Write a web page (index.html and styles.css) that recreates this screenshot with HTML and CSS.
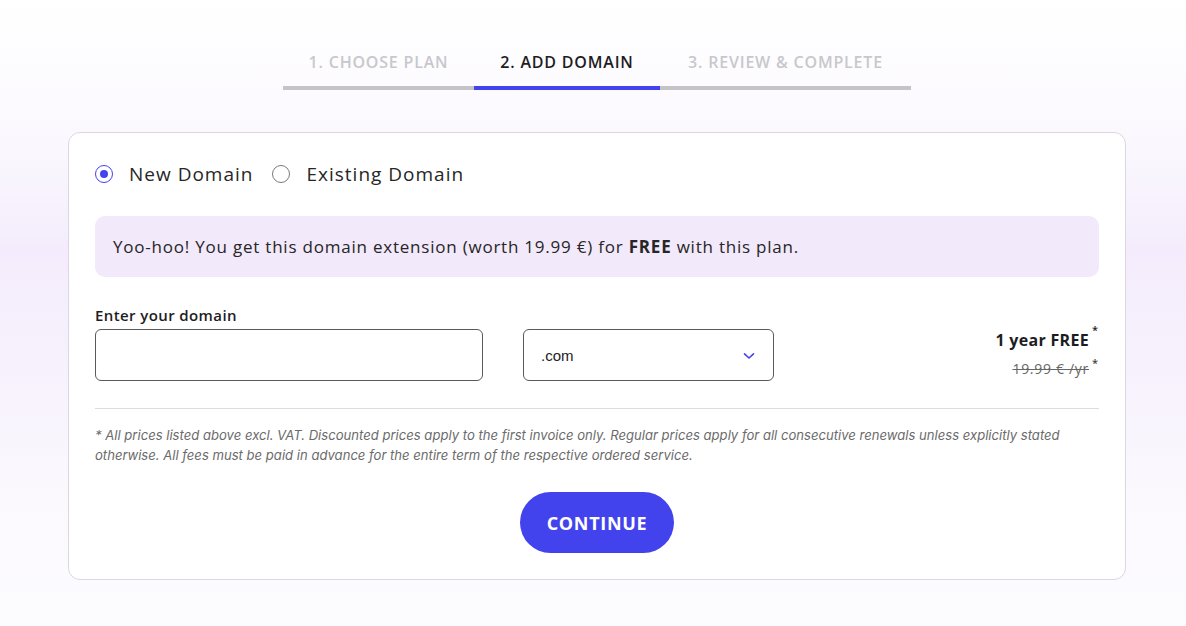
FILE: index.html
```html
<!DOCTYPE html>
<html>
<head>
<meta charset="utf-8">
<link rel="stylesheet" href="styles.css">
</head>
<body>
<div class="page">
  <nav class="steps">
    <div class="step step-1">1. CHOOSE PLAN</div>
    <div class="step step-2 active">2. ADD DOMAIN</div>
    <div class="step step-3">3. REVIEW &amp; COMPLETE</div>
  </nav>
  <main class="card">
    <div class="radios">
      <label class="radio"><span class="dot checked"></span>New Domain</label>
      <label class="radio"><span class="dot"></span>Existing Domain</label>
    </div>
    <div class="info">Yoo-hoo! You get this domain extension (worth 19.99 €) for <b>FREE</b> with this plan.</div>
    <div class="field-label">Enter your domain</div>
    <div class="row">
      <div class="input"></div>
      <div class="select"><span>.com</span>
        <svg width="12" height="8" viewBox="0 0 12 8"><path d="M1.5 1.8 L6 6 L10.5 1.8" fill="none" stroke="#4343ee" stroke-width="1.6" stroke-linecap="round" stroke-linejoin="round"/></svg>
      </div>
      <div class="price">
        <div class="free">1 year FREE<sup>*</sup></div>
        <div class="old"><s>19.99 € /yr</s><sup>*</sup></div>
      </div>
    </div>
    <hr class="divider">
    <p class="note">* All prices listed above excl. VAT. Discounted prices apply to the first invoice only. Regular prices apply for all consecutive renewals unless explicitly stated otherwise. All fees must be paid in advance for the entire term of the respective ordered service.</p>
    <div class="actions"><button class="btn">CONTINUE</button></div>
  </main>
</div>
</body>
</html>
```
FILE: styles.css
```css
html, body {
  margin: 0;
  padding: 0;
}
body {
  width: 1186px;
  height: 626px;
  overflow: hidden;
  font-family: "Open Sans", "Noto Sans", sans-serif;
  color: #1d1d1f;
  background: linear-gradient(to bottom, #ffffff 0%, #faf7fe 25%, #f4ecfc 40%, #f7f1fd 58%, #fbf9fe 80%, #fcfbfe 100%);
}
.page {
  display: flex;
  flex-direction: column;
  align-items: center;
  padding-top: 50px;
  padding-left: 8px;
}
.steps {
  display: flex;
}
.step {
  font-size: 16px;
  line-height: 24px;
  font-weight: 600;
  color: #c8c8cc;
  text-align: center;
  padding-bottom: 12px;
  border-bottom: 4px solid #c4c4c6;
  letter-spacing: 0.8px;
}
.step-1 { width: 191px; }
.step-2 { width: 186px; }
.step-3 { width: 251px; }
.step.active {
  color: #1d1d1f;
  border-bottom-color: #4343ee;
}
.card {
  box-sizing: border-box;
  width: 1058px;
  margin-top: 42px;
  background: #fff;
  border: 1px solid #dcd6e2;
  border-radius: 12px;
  padding: 29px 26px 26px;
}
.radios {
  display: flex;
  gap: 19px;
  height: 24px;
  align-items: center;
}
.radio {
  display: flex;
  align-items: center;
  font-size: 19px;
  color: #262626;
  letter-spacing: 1px;
}
.dot {
  box-sizing: border-box;
  width: 18px;
  height: 18px;
  border-radius: 50%;
  border: 1px solid #7a7a7a;
  margin-right: 16px;
  display: flex;
  align-items: center;
  justify-content: center;
}
.dot.checked {
  border-color: #4343ee;
}
.dot.checked::after {
  content: "";
  width: 8px;
  height: 8px;
  border-radius: 50%;
  background: #4343ee;
}
.info {
  margin-top: 30px;
  height: 61px;
  box-sizing: border-box;
  background: #f2e9fb;
  border-radius: 10px;
  padding: 0 18px;
  display: flex;
  align-items: center;
  font-size: 17px;
  letter-spacing: 0.78px;
  color: #262626;
  white-space: pre;
}
.info b {
  font-weight: 700;
}
.field-label {
  margin-top: 29px;
  font-size: 15px;
  line-height: 18px;
  font-weight: 600;
  letter-spacing: 0.4px;
  color: #1d1d1f;
}
.row {
  margin-top: 5px;
  display: flex;
  align-items: flex-start;
}
.input {
  box-sizing: border-box;
  width: 388px;
  height: 52px;
  border: 1px solid #5a5a5a;
  border-radius: 6px;
}
.select {
  box-sizing: border-box;
  width: 251px;
  height: 52px;
  margin-left: 40px;
  border: 1px solid #5a5a5a;
  border-radius: 6px;
  display: flex;
  align-items: center;
  justify-content: space-between;
  padding: 0 18px 0 17px;
  font-family: "Liberation Sans", Arial, sans-serif;
  font-size: 15px;
  color: #222;
}
.select svg {
  margin-top: 2px;
}
.price {
  margin-left: auto;
  margin-right: 1px;
  text-align: right;
}
.free {
  font-size: 16px;
  font-weight: 700;
  line-height: 22px;
  letter-spacing: 0.3px;
  color: #1d1d1f;
}
.old {
  margin-top: 9px;
  font-size: 14px;
  line-height: 18px;
  letter-spacing: 0.7px;
  color: #666;
}
.old s {
  text-decoration-thickness: 1px;
}
sup {
  font-size: 11px;
  vertical-align: top;
  position: relative;
  top: -5px;
  margin-left: 3px;
  line-height: 1;
  letter-spacing: 0;
  color: #1d1d1f;
  font-weight: 600;
}
.old sup { top: -3px; color: #444; }
.divider {
  margin: 27px 0 0;
  border: 0;
  border-top: 1px solid #dcdcdc;
}
.note {
  margin: 16px 0 0;
  font-family: "Inter", "Roboto", sans-serif;
  font-style: italic;
  font-size: 13.1px;
  line-height: 20px;
  color: #6b6b6b;
}
.actions {
  display: flex;
  justify-content: center;
  margin-top: 27px;
}
.btn {
  width: 154px;
  height: 61px;
  border: 0;
  border-radius: 31px;
  background: #4343ee;
  color: #fff;
  font-family: "Open Sans", sans-serif;
  font-size: 18px;
  font-weight: 700;
  letter-spacing: 0.7px;
}
```
